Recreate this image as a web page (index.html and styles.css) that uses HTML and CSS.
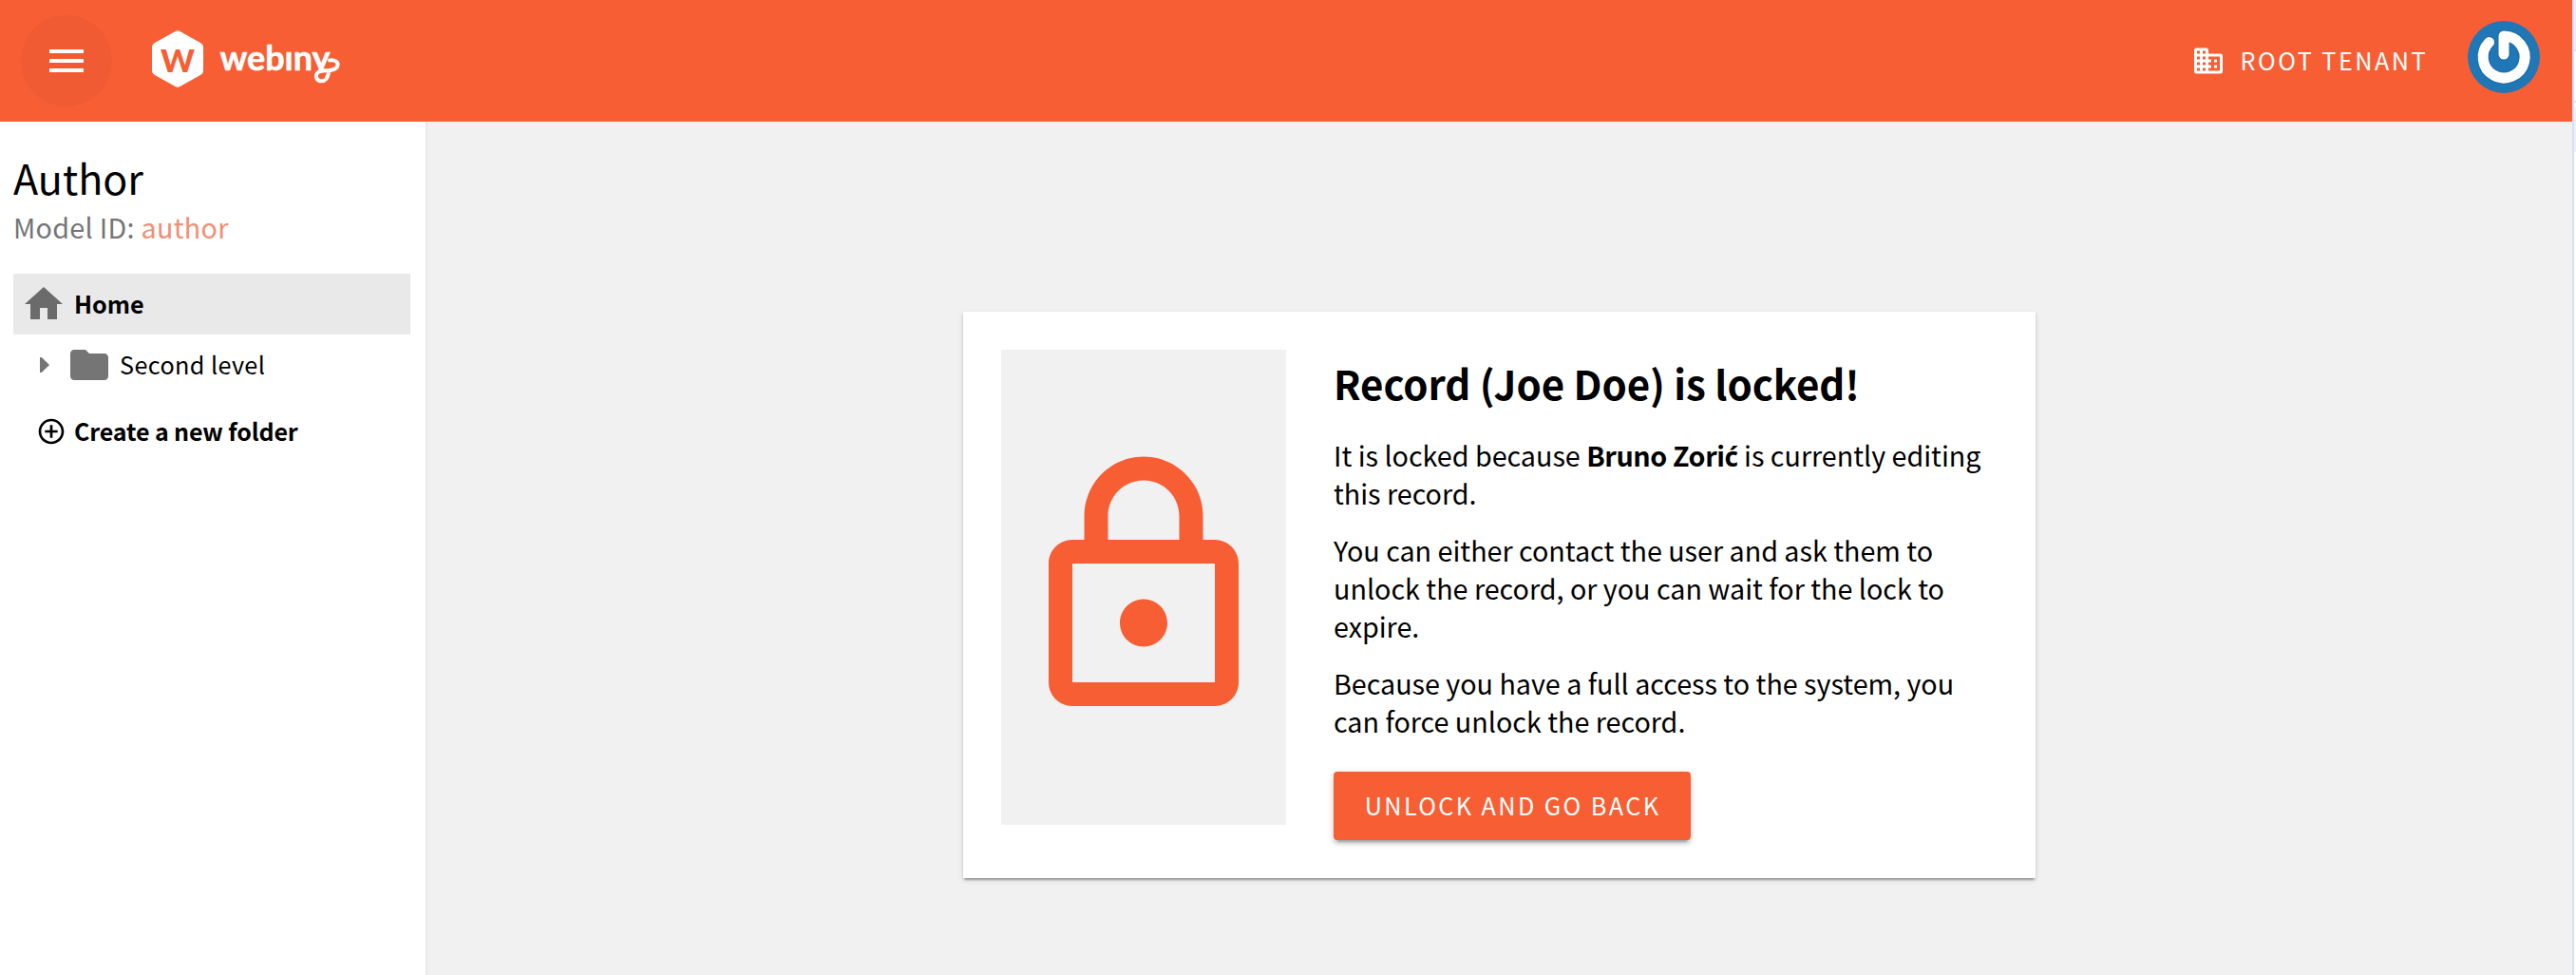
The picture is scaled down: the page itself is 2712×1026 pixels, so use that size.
FILE: index.html
```html
<!DOCTYPE html>
<html lang="en">
<head>
<meta charset="utf-8">
<title>Author - Webiny</title>
<link rel="stylesheet" href="styles.css">
</head>
<body>
<div class="screen">
  <div class="app">
    <header class="topbar">
      <button class="menu-button" aria-label="Menu">
        <svg width="48" height="48" viewBox="0 0 24 24"><path d="M3 18h18v-2H3v2zm0-5h18v-2H3v2zm0-7v2h18V6H3z"/></svg>
      </button>
      <svg class="logo" width="200" height="64" viewBox="0 0 200 64">
        <defs><clipPath id="word-area"><path d="M60 0h140v45H60z"/></clipPath></defs>
        <path d="M24.500 3q2.500-1.500 5 0L51 15q3 1.700 3 5v24q0 3.300-3 5L29.500 61q-2.500 1.500-5 0L3 49q-3-1.700-3-5V20q0-3.300 3-5z"/>
        <text class="logo-mark" x="9" y="46" textLength="36" lengthAdjust="spacingAndGlyphs">W</text>
        <g clip-path="url(#word-area)"><text class="logo-word" x="71.500" y="44" textLength="116" lengthAdjust="spacingAndGlyphs">webıny</text></g>
        <path class="logo-tail" d="M187 33.500c6-1 9.500 2 8.500 5.500-1.500 5.500-10 5-15 5.500-6 .5-8 3-7.500 6.500.5 4.500 7 6 10.500 2 1.500-2 2-4 2.500-6.500"/>
      </svg>
      <div class="tenant">
        <svg width="36" height="36" viewBox="0 0 24 24"><path fill-rule="evenodd" d="M3.500 3h7Q12 3 12 4.500V7h8.500Q22 7 22 8.500v11q0 1.500-1.500 1.500h-17Q2 21 2 19.500v-15Q2 3 3.500 3zM6 19H4v-2h2v2zm0-4H4v-2h2v2zm0-4H4V9h2v2zm0-4H4V5h2v2zm4 12H8v-2h2v2zm0-4H8v-2h2v2zm0-4H8V9h2v2zm0-4H8V5h2v2zm10 12h-8v-2h2v-2h-2v-2h2v-2h-2V9h8v10zM18 11h-2v2h2v-2zm0 4h-2v2h2v-2z"/></svg>
        <span>ROOT TENANT</span>
      </div>
      <svg class="avatar" width="76" height="76" viewBox="0 0 76 76">
        <circle class="avatar-disc" cx="38" cy="38" r="38"/>
        <path class="avatar-shade" d="M38 35V16A22 22 0 1 1 22.500 22.500"/>
        <path class="avatar-glyph" d="M38 35V16A22 22 0 1 1 22.500 22.500"/>
      </svg>
    </header>
    <div class="body">
      <aside class="sidebar">
        <h1 class="title">Author</h1>
        <p class="model">Model ID: <span class="model-id">author</span></p>
        <nav class="tree">
          <div class="row row-home">
            <svg class="icon" width="48" height="48" viewBox="0 0 24 24"><path d="M10 20v-6h4v6h5v-8h3L12 3 2 12h3v8z"/></svg>
            <span>Home</span>
          </div>
          <div class="row row-folder">
            <svg class="icon" width="10" height="16" viewBox="0 0 10 16"><path d="M0 0h1.800L10 8l-8.200 8H0z"/></svg>
            <svg class="icon folder-icon" width="48" height="48" viewBox="0 0 24 24"><path d="M10 4H4c-1.100 0-1.990.9-1.990 2L2 18c0 1.100.9 2 2 2h16c1.100 0 2-.9 2-2V8c0-1.100-.9-2-2-2h-8l-2-2z"/></svg>
            <span>Second level</span>
          </div>
          <div class="row row-create">
            <svg width="32" height="32" viewBox="0 0 24 24"><path d="M13 7h-2v4H7v2h4v4h2v-4h4v-2h-4V7zm-1-5C6.480 2 2 6.480 2 12s4.480 10 10 10 10-4.480 10-10S17.520 2 12 2zm0 18c-4.410 0-8-3.590-8-8s3.590-8 8-8 8 3.590 8 8-3.590 8-8 8z"/></svg>
            <span>Create a new folder</span>
          </div>
        </nav>
      </aside>
      <main class="content">
        <section class="card">
          <div class="lock">
            <svg width="300" height="300" viewBox="0 0 24 24"><path d="M12 17c1.100 0 2-.9 2-2s-.9-2-2-2-2 .9-2 2 .9 2 2 2zm6-9h-1V6c0-2.760-2.240-5-5-5S7 3.240 7 6v2H6c-1.100 0-2 .9-2 2v10c0 1.100.9 2 2 2h12c1.100 0 2-.9 2-2V10c0-1.100-.9-2-2-2zM9 6c0-1.660 1.340-3 3-3s3 1.340 3 3v2H9V6zm9 14H6V10h12v10z"/></svg>
          </div>
          <div class="details">
            <h2 class="heading">Record (Joe Doe) is locked!</h2>
            <p>It is locked because <strong>Bruno Zori<span class="accented">ć</span></strong> is currently editing this record.</p>
            <p>You can either contact the user and ask them to unlock the record, or you can wait for the lock to expire.</p>
            <p>Because you have a full access to the system, you can force unlock the record.</p>
            <button class="unlock">UNLOCK AND GO BACK</button>
          </div>
        </section>
      </main>
    </div>
  </div>
  <div class="edge"></div>
</div>
</body>
</html>
```

FILE: styles.css
```css
* { box-sizing: border-box; }

body {
  margin: 0;
  font-family: "Noto Sans CJK SC", "Noto Sans", sans-serif;
  color: #000;
  background: #fff;
}

h1, h2, p { margin: 0; font-weight: 400; }

button { border: 0; padding: 0; font-family: inherit; }

svg { display: block; flex: none; }

.screen { display: flex; height: 1026px; overflow: hidden; }

.app { flex: 1; display: flex; flex-direction: column; }

.edge {
  width: 4px;
  border-left: 2px solid #d5e1fb;
  background: linear-gradient(#e9f0fd 52px, #d5e1fb 52px 54px, #fff 54px 106px, #d5e1fb 106px 108px, #fff 108px 112px, #f1f1f1 112px 160px, #fff 160px);
}

.topbar {
  height: 128px;
  display: flex;
  align-items: center;
  padding: 0 34px 0 22px;
  background: #f75e34;
  color: #fff;
  fill: #fff;
}

.menu-button {
  width: 96px;
  height: 96px;
  border-radius: 50%;
  display: flex;
  align-items: center;
  justify-content: center;
  background: #f05b33;
  fill: #fff;
}

.logo { margin: 0 auto 4px 42px; }

.logo-mark {
  font: 900 33px Lato, sans-serif;
  fill: #f75e34;
}

.logo-word {
  font: 700 37px Lato, sans-serif;
  stroke: #fff;
  stroke-width: .6;
  stroke-linejoin: round;
}

.logo-tail {
  fill: none;
  stroke: #fff;
  stroke-width: 4;
  stroke-linecap: round;
}

.tenant {
  display: flex;
  align-items: center;
  gap: 16px;
  margin-right: 42px;
  font-size: 25.2px;
  line-height: 40px;
  letter-spacing: 2.48px;
}

.tenant span { margin-top: -2px; }

.avatar { margin-bottom: 8px; }

.avatar-disc { fill: #1f77b5; }

.avatar-glyph, .avatar-shade {
  fill: none;
  stroke: #fff;
  stroke-width: 11;
  stroke-linecap: round;
  stroke-linejoin: round;
}

.avatar-shade { stroke: #1a639c; stroke-width: 13; opacity: .5; }

.body { flex: 1; display: flex; }

.sidebar {
  width: 450px;
  padding: 32px 16px 0 14px;
  background: #fff;
  border-right: 2px solid #e9e9e9;
}

.title { font-size: 43px; line-height: 52px; }

.model {
  font-size: 28.7px;
  line-height: 40px;
  letter-spacing: .3px;
  margin-top: 7px;
  color: #757575;
}

.model-id { color: #f08f74; }

.tree { margin-top: 29px; }

.row {
  height: 64px;
  display: flex;
  align-items: center;
  font-size: 25.2px;
  line-height: 40px;
}

.row span { margin-top: -3px; }

.icon { fill: #757575; }

.row-home {
  padding-left: 8px;
  gap: 8px;
  font-weight: 700;
  background: #e9e9e9;
}

.row-home .icon { fill: #6b6b6b; }

.row-folder { padding-left: 28px; letter-spacing: .4px; }

.folder-icon { margin: 0 8px 0 18px; }

.row-create {
  margin-top: 6px;
  padding-left: 24px;
  gap: 8px;
  font-weight: 700;
  font-size: 25px;
  letter-spacing: -.12px;
}

.content {
  flex: 1;
  display: flex;
  justify-content: center;
  align-items: flex-start;
  padding: 200px 1px 0 0;
  background: #f1f1f1;
}

.card {
  width: 1129px;
  display: flex;
  align-items: flex-start;
  gap: 50px;
  padding: 40px;
  background: #fff;
  box-shadow: 0 4px 2px -2px rgba(0, 0, 0, .2), 0 2px 2px rgba(0, 0, 0, .14), 0 2px 6px rgba(0, 0, 0, .12);
}

.lock {
  width: 300px;
  height: 500px;
  display: flex;
  align-items: center;
  background: #f1f1f1;
  fill: #f75e34;
}

.details { flex: 1; font-size: 28.7px; line-height: 40px; }

.heading {
  margin: 10px 0 31px;
  font-size: 42px;
  line-height: 50px;
  font-weight: 700;
  letter-spacing: -.05px;
}

.details p + p { margin-top: 20px; }

.details strong { letter-spacing: -.4px; }

.accented {
  font-family: "Noto Sans", sans-serif;
  font-size: 28px;
  line-height: 1;
}

.unlock {
  display: block;
  width: 376px;
  height: 72px;
  margin-top: 33px;
  padding: 0 0 3px 1px;
  border-radius: 4px;
  background: #f75e34;
  color: #fff;
  font-size: 25.2px;
  line-height: 40px;
  letter-spacing: 2.42px;
  box-shadow: 0 6px 2px -4px rgba(0, 0, 0, .2), 0 4px 4px rgba(0, 0, 0, .14), 0 2px 10px rgba(0, 0, 0, .12);
}
```
